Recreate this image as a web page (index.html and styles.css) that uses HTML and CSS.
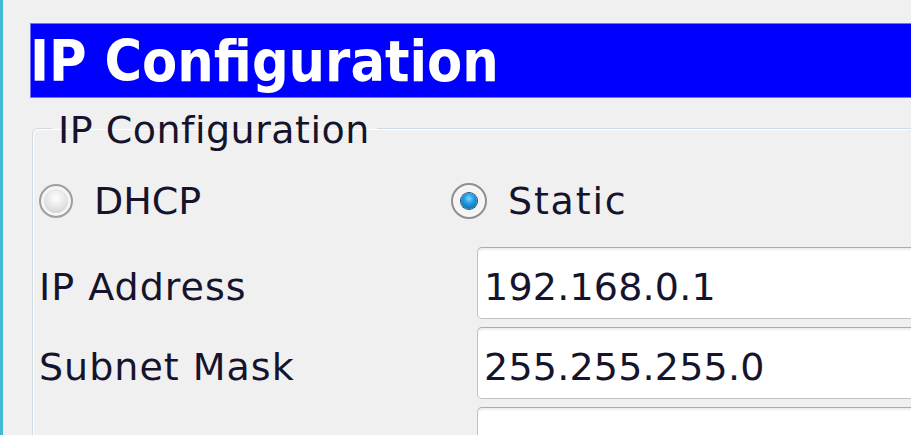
FILE: index.html
```html
<!DOCTYPE html>
<html lang="en">
<head>
<meta charset="utf-8">
<title>IP Configuration</title>
<link rel="stylesheet" href="styles.css">
</head>
<body>
<div class="frame">
  <div class="page">
    <div class="title">IP Configuration</div>
    <fieldset class="group">
      <legend class="legend">IP Configuration</legend>
      <div class="radios">
        <label class="option option-dhcp"><span class="radio"></span><span class="opt-text dhcp-text">DHCP</span></label>
        <label class="option"><span class="radio checked"><span class="dot"></span></span><span class="opt-text">Static</span></label>
      </div>
      <div class="row">
        <div class="label">IP Address</div>
        <div class="field">192.168.0.1</div>
      </div>
      <div class="row">
        <div class="label">Subnet Mask</div>
        <div class="field">255.255.255.0</div>
      </div>
      <div class="row">
        <div class="label">Default Gateway</div>
        <div class="field"></div>
      </div>
    </fieldset>
  </div>
</div>
</body>
</html>
```
FILE: styles.css
```css
html, body {
  margin: 0;
  padding: 0;
}
body {
  width: 911px;
  height: 435px;
  overflow: hidden;
  background: #f0f0f0;
  font-family: "DejaVu Sans", Verdana, sans-serif;
  color: #16142c;
}
.frame {
  height: 435px;
  border-left: 3px solid #41bad3;
  box-shadow: inset 1px 0 0 #e4f4f8;
  padding-left: 27px;
}
.page {
  width: 1100px;
  padding-top: 23px;
}
.title {
  box-sizing: border-box;
  height: 75px;
  background: #0000ff;
  border: 1px solid #7070ff;
  color: #ffffff;
  font-family: "DejaVu Sans Condensed", "DejaVu Sans", sans-serif;
  font-weight: bold;
  font-size: 57px;
  line-height: 69px;
  padding-top: 3px;
  text-indent: -1px;
  white-space: nowrap;
}
.group {
  margin: 6px 0 0 2px;
  padding: 0 0 40px 6px;
  border: 1px solid #cfd9e1;
  border-radius: 6px;
  box-shadow: inset 1px 1px 0 #ffffff;
  min-width: 0;
}
.legend {
  margin-left: 13px;
  padding: 4px 7px 0 6px;
  font-size: 38px;
  line-height: 44px;
  letter-spacing: 0.5px;
}
.radios {
  display: flex;
  align-items: center;
  height: 44px;
  margin-top: 27px;
  margin-bottom: 24px;
  font-size: 38px;
}
.option {
  display: flex;
  align-items: center;
}
.option-dhcp {
  width: 412px;
}
.radio {
  width: 34px;
  height: 34px;
  box-sizing: border-box;
  border-radius: 50%;
  border: 2px solid #a0a0a0;
  margin-left: 0;
  margin-right: 18px;
  background: radial-gradient(circle at 50% 40%, #ffffff 0%, #e4e4e4 45%, #c8c8c8 75%, #f4f4f4 100%);
  box-shadow: inset 0 0 0 3px #f6f6f6;
  display: flex;
  align-items: center;
  justify-content: center;
}
.radio.checked {
  width: 36px;
  height: 36px;
  margin-right: 21px;
  background: #f4f4f4;
  border-color: #8f8f8f;
}
.dot {
  width: 16px;
  height: 16px;
  border-radius: 50%;
  background: radial-gradient(circle at 50% 35%, #7fd4ff 0%, #1f9be0 40%, #0a5d94 100%);
  box-shadow: 0 0 0 1px #1c4f74;
}
.opt-text {
  line-height: 44px;
  letter-spacing: 1.8px;
}
.dhcp-text {
  letter-spacing: 0;
  margin-left: 3px;
}
.row {
  display: flex;
  align-items: baseline;
  margin-bottom: 8px;
  font-size: 38px;
}
.label {
  width: 438px;
  line-height: 44px;
  letter-spacing: 1px;
  white-space: nowrap;
}
.field {
  width: 600px;
  height: 72px;
  box-sizing: border-box;
  background: #ffffff;
  border: 1px solid #bfc3c6;
  border-top-color: #a9adb0;
  border-radius: 5px;
  box-shadow: inset 0 2px 2px rgba(0, 0, 0, 0.07);
  padding: 8px 0 0 6px;
  line-height: 62px;
  letter-spacing: 0.2px;
  white-space: nowrap;
}
```
